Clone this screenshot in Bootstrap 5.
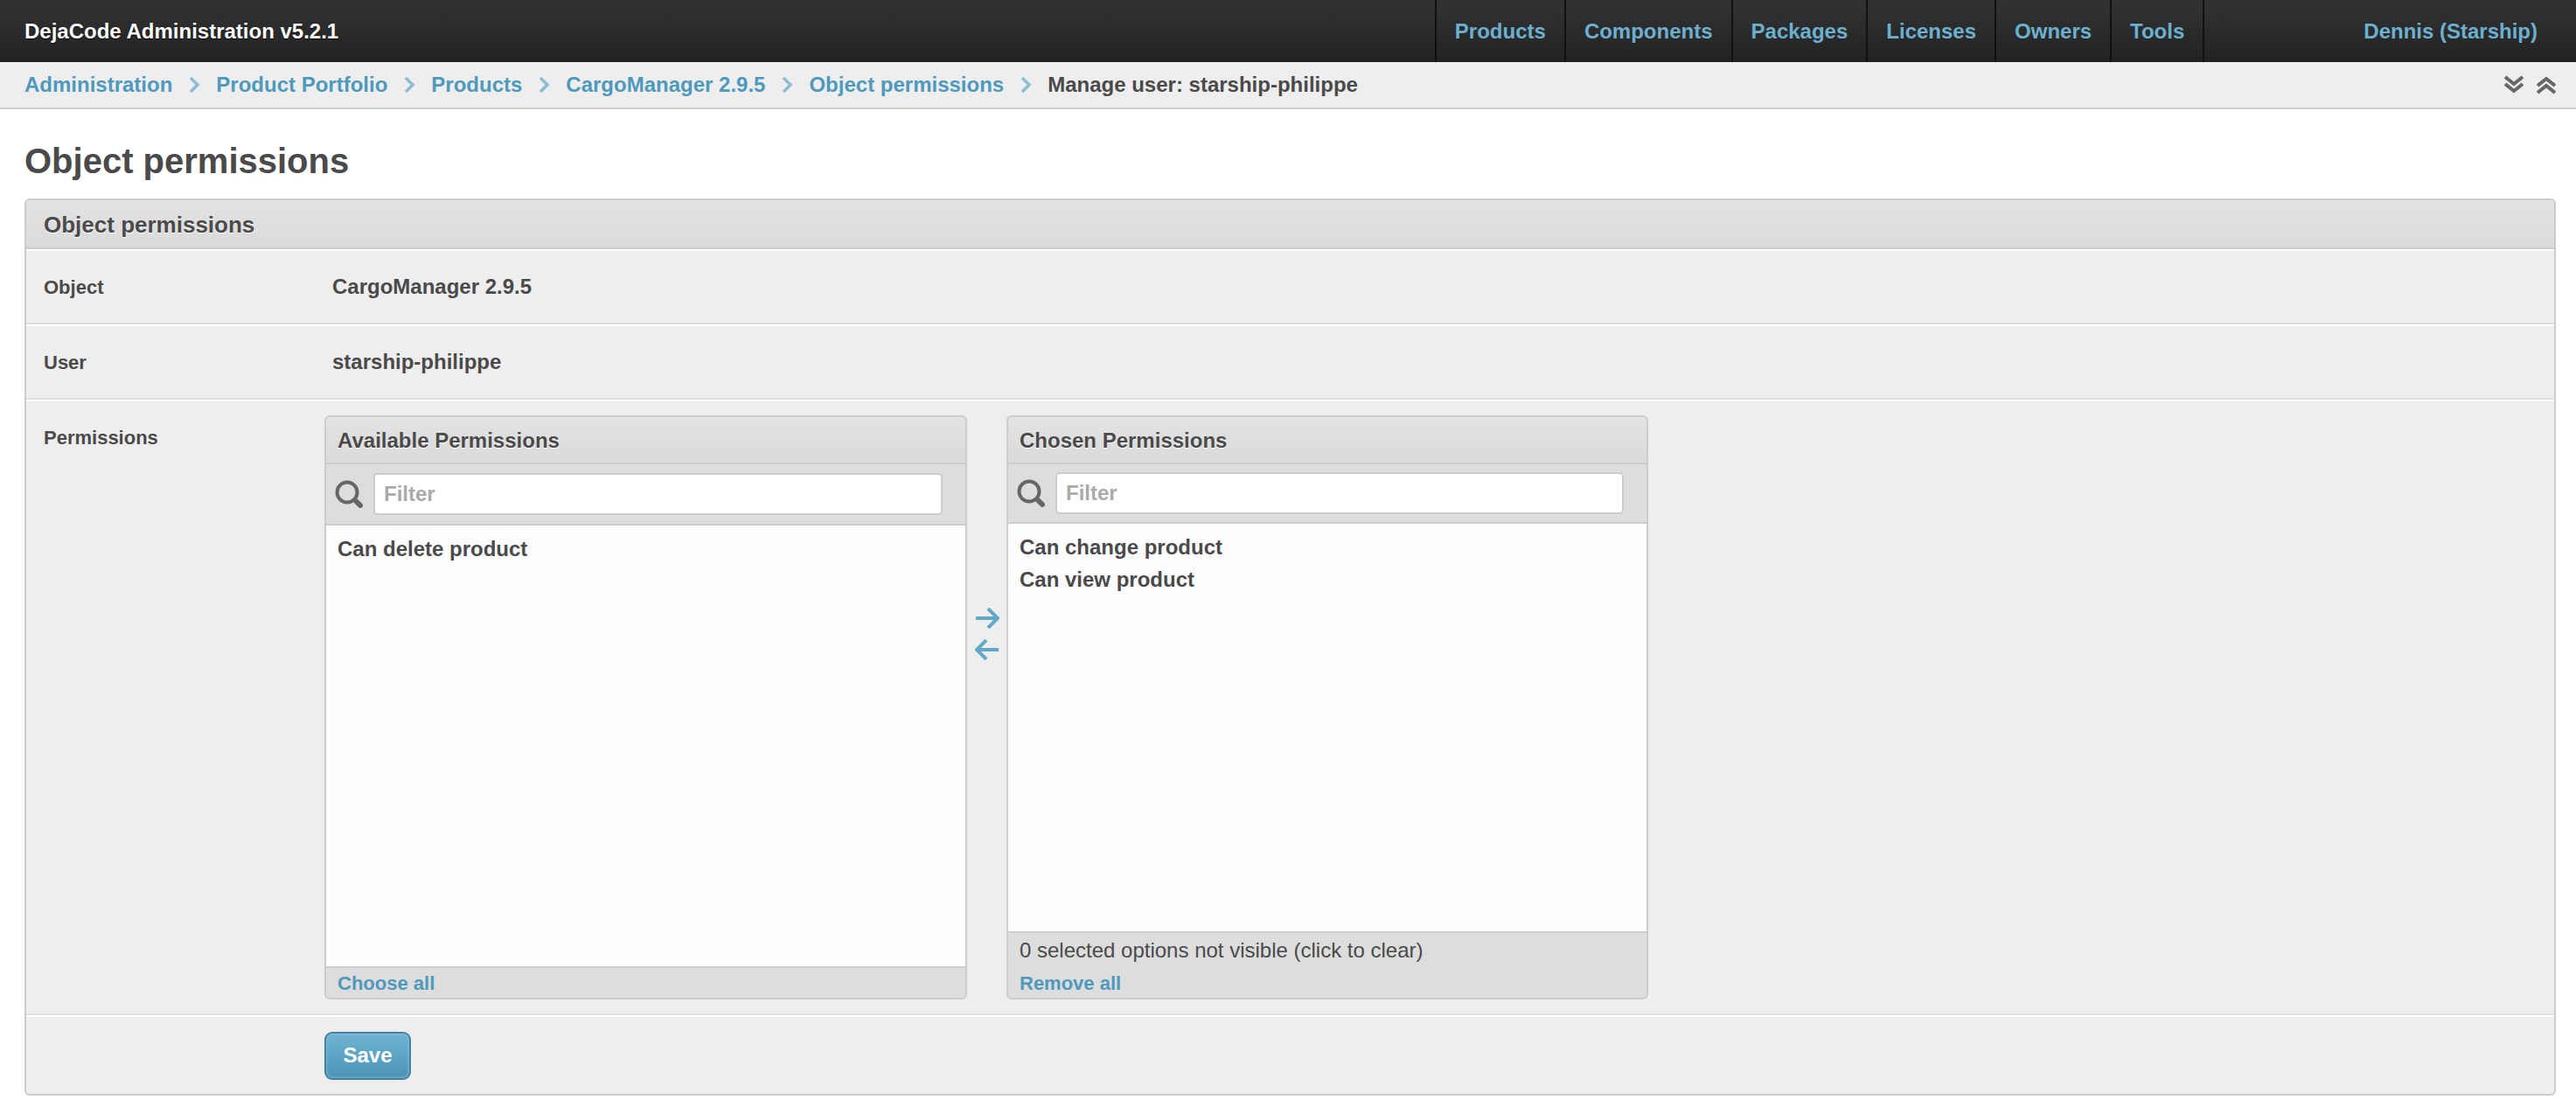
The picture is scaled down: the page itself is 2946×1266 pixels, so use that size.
<!DOCTYPE html>
<html lang="en">
<head>
    <meta charset="UTF-8">
    <meta name="viewport" content="width=device-width, initial-scale=1.0">
    <title>Object permissions</title>
    <link href="https://cdn.jsdelivr.net/npm/bootstrap@5.3.0/dist/css/bootstrap.min.css" rel="stylesheet">
    <style>
        body {
            font-family: "Liberation Sans", Arial, sans-serif;
            font-size: 24px;
            color: #4a4a4a;
            background: #fff;
            min-height: 1266px;
        }
        a { text-decoration: none; }
        .top-bar {
            height: 71px;
            background: linear-gradient(#333, #222);
        }
        .top-brand { color: #fff; font-weight: 700; font-size: 24px; margin-left: 28px; text-shadow: 0 1px 1px #000; }
        .top-links { margin-left: auto; }
        .top-link {
            display: block;
            height: 71px;
            line-height: 71px;
            padding: 0 21px;
            border-left: 2px solid #111;
            color: #6cb0d0;
            font-weight: 700;
            font-size: 24px;
        }
        .top-link.last-link { border-right: 2px solid #111; }
        .top-user { color: #6cb0d0; font-weight: 700; margin-left: 182px; margin-right: 44px; }
        .crumb-bar {
            height: 54px;
            background: #eee;
            border-bottom: 2px solid #ccc;
            padding: 0 23px 0 28px;
            font-weight: 700;
            font-size: 24px;
        }
        .crumb-bar a { color: #4f99bc; }
        .crumb-sep { margin: 0 18px; }
        .crumb-current { color: #4a4a4a; }
        .crumb-arrows { margin-left: auto; gap: 15px; }
        .page-title {
            font-size: 40px;
            font-weight: 700;
            color: #4a4a4a;
            margin: 0;
            padding: 37px 0 0 28px;
            height: 102px;
            line-height: 45px;
        }
        .main-panel {
            margin: 0 23px 0 28px;
            border: 2px solid #ccc;
            border-radius: 6px;
            background: #eee;
        }
        .panel-head {
            height: 56px;
            line-height: 56px;
            padding-left: 20px;
            font-size: 26px;
            font-weight: 700;
            background: linear-gradient(#e3e3e3, #dadada);
            border-bottom: 2px solid #ccc;
            text-shadow: 0 1px 0 #fff;
            border-radius: 5px 5px 0 0;
        }
        .form-line {
            border-top: 2px solid #fff;
            border-bottom: 2px solid #ddd;
        }
        .form-line:last-child { border-bottom: 0; }
        .line-short { height: 86px; }
        .line-save { height: 90px; }
        .line-label {
            width: 341px;
            padding-left: 20px;
            flex: none;
            font-size: 22px;
            font-weight: 700;
        }
        .label-top { padding-top: 9px; }
        .line-value { font-size: 24px; font-weight: 700; margin-left: 9px; }
        .pick-box {
            width: 734px;
            height: 668px;
            border: 2px solid #ccc;
            border-radius: 6px;
            background: #ddd;
        }
        .pick-box.box-wide { width: 735px; }
        .pick-head {
            height: 54px;
            line-height: 53px;
            padding-left: 13px;
            font-size: 24px;
            font-weight: 700;
            background: linear-gradient(#e3e3e3, #dadada);
            border-bottom: 2px solid #ccc;
            text-shadow: 0 1px 0 #fff;
            border-radius: 5px 5px 0 0;
        }
        .pick-filter {
            height: 70px;
            border-bottom: 2px solid #ccc;
            padding: 0 26px 0 10px;
            gap: 12px;
        }
        .pick-filter.filter-short { height: 68px; }
        .pick-filter .form-control {
            height: 48px;
            border: 2px solid #ccc;
            border-radius: 5px;
            font-size: 24px;
            font-weight: 700;
            padding: 0 10px;
            background: #fff;
        }
        .pick-filter .form-control::placeholder { color: #aaa; opacity: 1; }
        .pick-list {
            background: #fdfdfd;
            padding: 8px 13px;
            font-weight: 700;
            font-size: 24px;
            line-height: 37px;
        }
        .pick-foot {
            border-top: 2px solid #ccc;
            padding: 0 13px;
            font-size: 24px;
            border-radius: 0 0 5px 5px;
        }
        .pick-foot a { color: #4f99bc; font-weight: 700; font-size: 22px; height: 34px; line-height: 36px; display: block; }
        .foot-note { line-height: 40px; }
        .swap-col { width: 45px; padding-top: 220px; gap: 12px; }
        .save-btn {
            width: 99px;
            height: 55px;
            padding: 0;
            border: 2px solid #44809f;
            border-radius: 9px;
            background: linear-gradient(#6fb3d2, #4a94b8);
            box-shadow: inset 0 0 3px #a9d2e4;
            color: #fff;
            font-size: 24px;
            font-weight: 700;
        }
    </style>
</head>
<body>
    <nav class="top-bar d-flex align-items-center">
        <span class="top-brand">DejaCode Administration v5.2.1</span>
        <div class="top-links d-flex">
            <a class="top-link" href="#">Products</a>
            <a class="top-link" href="#">Components</a>
            <a class="top-link" href="#">Packages</a>
            <a class="top-link" href="#">Licenses</a>
            <a class="top-link" href="#">Owners</a>
            <a class="top-link last-link" href="#">Tools</a>
        </div>
        <a class="top-user" href="#">Dennis (Starship)</a>
    </nav>

    <div class="crumb-bar d-flex align-items-center">
        <a href="#">Administration</a>
        <svg class="crumb-sep" width="14" height="22" viewBox="0 0 14 22" fill="none" stroke="#8dbdd3" stroke-width="3.5"><path d="M3 3l8 8-8 8"/></svg>
        <a href="#">Product Portfolio</a>
        <svg class="crumb-sep" width="14" height="22" viewBox="0 0 14 22" fill="none" stroke="#8dbdd3" stroke-width="3.5"><path d="M3 3l8 8-8 8"/></svg>
        <a href="#">Products</a>
        <svg class="crumb-sep" width="14" height="22" viewBox="0 0 14 22" fill="none" stroke="#8dbdd3" stroke-width="3.5"><path d="M3 3l8 8-8 8"/></svg>
        <a href="#">CargoManager 2.9.5</a>
        <svg class="crumb-sep" width="14" height="22" viewBox="0 0 14 22" fill="none" stroke="#8dbdd3" stroke-width="3.5"><path d="M3 3l8 8-8 8"/></svg>
        <a href="#">Object permissions</a>
        <svg class="crumb-sep" width="14" height="22" viewBox="0 0 14 22" fill="none" stroke="#8dbdd3" stroke-width="3.5"><path d="M3 3l8 8-8 8"/></svg>
        <span class="crumb-current">Manage user: starship-philippe</span>
        <div class="crumb-arrows d-flex">
            <svg width="22" height="22" viewBox="0 0 22 22" fill="none" stroke="#666" stroke-width="4"><path d="M1 2l10 8 10-8M1 10l10 8 10-8"/></svg>
            <svg width="22" height="22" viewBox="0 0 22 22" fill="none" stroke="#666" stroke-width="4"><path d="M1 12l10-8 10 8M1 20l10-8 10 8"/></svg>
        </div>
    </div>

    <h1 class="page-title">Object permissions</h1>

    <div class="main-panel">
        <div class="panel-head">Object permissions</div>
        <div class="form-line line-short d-flex align-items-center">
            <div class="line-label">Object</div>
            <div class="line-value">CargoManager 2.9.5</div>
        </div>
        <div class="form-line line-short d-flex align-items-center">
            <div class="line-label">User</div>
            <div class="line-value">starship-philippe</div>
        </div>
        <div class="form-line d-flex pt-3 pb-3">
            <div class="line-label label-top">Permissions</div>
            <div class="d-flex">
                <div class="pick-box box-wide d-flex flex-column">
                    <div class="pick-head">Available Permissions</div>
                    <div class="pick-filter d-flex align-items-center">
                        <svg class="flex-shrink-0" width="32" height="32" viewBox="0 0 32 32" fill="none" stroke="#666"><circle cx="14" cy="14" r="11.5" stroke-width="4"/><path d="M23 23l6 6" stroke-width="6" stroke-linecap="round"/></svg>
                        <input class="form-control" placeholder="Filter">
                    </div>
                    <div class="pick-list flex-grow-1">Can delete product</div>
                    <div class="pick-foot"><a href="#">Choose all</a></div>
                </div>
                <div class="swap-col d-flex flex-column align-items-center">
                    <svg width="28" height="24" viewBox="0 0 28 24" fill="none" stroke="#62a8c8" stroke-width="4"><path d="M1 12h25M15 1l11 11-11 11"/></svg>
                    <svg width="28" height="24" viewBox="0 0 28 24" fill="none" stroke="#62a8c8" stroke-width="4"><path d="M27 12H2M13 1L2 12l11 11"/></svg>
                </div>
                <div class="pick-box d-flex flex-column">
                    <div class="pick-head">Chosen Permissions</div>
                    <div class="pick-filter filter-short d-flex align-items-center">
                        <svg class="flex-shrink-0" width="32" height="32" viewBox="0 0 32 32" fill="none" stroke="#666"><circle cx="14" cy="14" r="11.5" stroke-width="4"/><path d="M23 23l6 6" stroke-width="6" stroke-linecap="round"/></svg>
                        <input class="form-control" placeholder="Filter">
                    </div>
                    <div class="pick-list flex-grow-1">Can change product<br>Can view product</div>
                    <div class="pick-foot">
                        <div class="foot-note">0 selected options not visible (click to clear)</div>
                        <a href="#">Remove all</a>
                    </div>
                </div>
            </div>
        </div>
        <div class="form-line line-save d-flex align-items-center">
            <div class="line-label"></div>
            <button class="save-btn" type="button">Save</button>
        </div>
    </div>
</body>
</html>
